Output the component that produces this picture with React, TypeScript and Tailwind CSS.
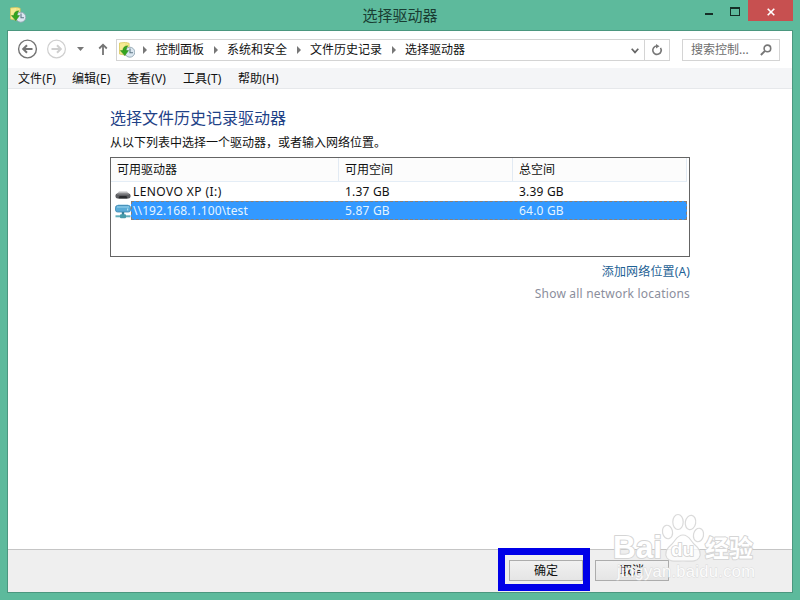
import React from 'react';

interface Drive {
  name: string;
  free: string;
  total: string;
  network?: boolean;
}

const drives: Drive[] = [
  { name: 'LENOVO XP (I:)', free: '1.37 GB', total: '3.39 GB' },
  { name: '\\\\192.168.1.100\\test', free: '5.87 GB', total: '64.0 GB', network: true },
];

const crumbs = ['控制面板', '系统和安全', '文件历史记录', '选择驱动器'];

const menus = [
  { label: '文件(F)', width: 'w-[54px]' },
  { label: '编辑(E)', width: 'w-[55px]' },
  { label: '查看(V)', width: 'w-[56px]' },
  { label: '工具(T)', width: 'w-[55px]' },
  { label: '帮助(H)', width: 'w-[55px]' },
];

const HistoryIcon: React.FC = () => (
  <svg width="16" height="16" viewBox="0 0 16 16" className="block shrink-0">
    <path d="M.5 1 6.5.4l3.6.9v10.9l-3.4 1L.5 12z" fill="#f6eb93" stroke="#d9c75c" strokeWidth=".8" />
    <path d="M7 .8v12" stroke="#e8d970" strokeWidth=".8" />
    <circle cx="10.8" cy="10.2" r="5" fill="#dbe7f0" stroke="#91a5b1" strokeWidth=".9" />
    <path d="M11 6.6v4.2h3" fill="none" stroke="#607887" strokeWidth="1.1" />
    <path d="M8.8 3.8C5.2 4 3.9 6 3.9 8.6H1.4l4.4 5 3.7-5H7.2c0-2 .3-3.2 1.6-4.8z" fill="#35a51f" stroke="#23851a" strokeWidth=".5" />
  </svg>
);

const CrumbArrow: React.FC = () => (
  <svg width="4" height="8" viewBox="0 0 4 8" className="block shrink-0">
    <path d="M0 0v8l4-4z" fill="#777" />
  </svg>
);

const LocalDriveIcon: React.FC = () => (
  <svg width="16" height="16" viewBox="0 0 16 16" className="block">
    <path d="M4 7.5h8l3.2 3.5H.8z" fill="#b9b9bb" />
    <rect x=".5" y="9.5" width="15" height="5" rx="2" fill="#5c5d61" />
    <path d="M2 10h12" stroke="#8e8e90" />
    <path d="M3.5 14.5c.3-2 1-2.4 2-2.4h5c1 0 1.7.4 2 2.4z" fill="#292a2d" />
  </svg>
);

const NetworkDriveIcon: React.FC = () => (
  <svg width="16" height="16" viewBox="0 0 16 16" className="block">
    <path d="M3 1.5h10l2.5 3H.5z" fill="#9ccfe8" />
    <rect x=".5" y="2.5" width="15" height="6.5" rx="2" fill="#5aabd6" stroke="#3c86b0" strokeWidth=".8" />
    <path d="M2 4h12" stroke="#9dd5ee" />
    <path d="M12.7 5.5v2" stroke="#c7eefa" />
    <path d="M6.8 9h2.4v3H6.8z" fill="#377f99" />
    <path d="M.5 12.3h15v2H.5z" fill="#62aebb" />
    <rect x="5" y="11.2" width="6" height="4" rx="1" fill="#479ba9" />
  </svg>
);

const TitleBar: React.FC = () => (
  <div className="relative flex h-[30px] items-start justify-between pl-[10px] pr-[7px]">
    <div className="pt-[7px]">
      <HistoryIcon />
    </div>
    <div className="absolute inset-x-0 top-[5px] text-center text-[15px] leading-5 text-[#193d32]">选择驱动器</div>
    <div className="flex h-[21px]">
      <div className="flex w-[27px] justify-center pt-[13px]">
        <div className="h-[2px] w-2 bg-[#152e26]" />
      </div>
      <div className="flex w-[26px] justify-center pt-[7px]">
        <div className="h-[9px] w-[10px] border border-t-2 border-[#152e26]" />
      </div>
      <div className="flex w-[45px] items-center justify-center bg-[#c75050]">
        <svg width="8" height="8" viewBox="0 0 8 8" className="mt-[2px]">
          <path d="m.7.7 6.6 6.6M7.3.7.7 7.3" stroke="#fff" strokeWidth="1.6" />
        </svg>
      </div>
    </div>
  </div>
);

const NavBar: React.FC = () => (
  <div className="flex h-[37px] items-center pl-[9px] pr-3">
    <svg width="99" height="22" viewBox="0 0 99 22" className="block shrink-0">
      <g fill="none" stroke="#747474" strokeWidth="1.4">
        <circle cx="10.5" cy="10" r="8.9" />
        <path d="M15.5 10H6.5M10 6.2 6.2 10l3.8 3.8" strokeWidth="2" />
      </g>
      <g fill="none" stroke="#cfcfcf" strokeWidth="1.2">
        <circle cx="39.5" cy="10" r="8.9" />
        <path d="M34.5 10h9M40 6.2l3.8 3.8-3.8 3.8" strokeWidth="2" />
      </g>
      <path d="M60 8h7l-3.5 4z" fill="#777" />
      <path d="M86 16V5.5M82.2 9.5 86 5.7l3.8 3.8" fill="none" stroke="#747474" strokeWidth="1.8" />
    </svg>
    <div className="flex h-[22px] w-[554px] shrink-0 border border-[#d4d4d4]">
      <div className="flex flex-1 items-center pl-[2px]">
        <HistoryIcon />
        {crumbs.map((crumb) => (
          <div key={crumb} className="flex items-center pl-2">
            <CrumbArrow />
            <span className="mr-[2px] pl-[9px] text-[12px] leading-5 text-[#111]">{crumb}</span>
          </div>
        ))}
      </div>
      <svg width="8" height="6" viewBox="0 0 8 6" className="mr-[5px] mt-[8px]">
        <path d="m.7.8 3.3 3.6L7.3.8" fill="none" stroke="#666" strokeWidth="1.7" />
      </svg>
      <div className="flex w-[25px] items-center justify-center border-l border-[#d4d4d4]">
        <svg width="12" height="12" viewBox="0 0 12 12">
          <path d="M9.5 3.9A4.2 4.2 0 1 1 5.8 2" fill="none" stroke="#777" strokeWidth="1.6" />
          <path d="M5 0v4.6L8.5 2.3z" fill="#777" />
        </svg>
      </div>
    </div>
    <div className="ml-3 flex h-[22px] w-[98px] shrink-0 items-center justify-between border border-[#d4d4d4] pl-[8px] pr-[7px] text-[12px] text-[#6d6d6d]">
      <span>搜索控制...</span>
      <svg width="12" height="12" viewBox="0 0 12 12">
        <circle cx="7.4" cy="4.4" r="3.3" fill="none" stroke="#777" strokeWidth="1.6" />
        <path d="M5 6.9.9 11" stroke="#777" strokeWidth="2" />
      </svg>
    </div>
  </div>
);

const DriveList: React.FC = () => (
  <div className="mt-[5px] h-[100px] w-[580px] border border-[#646464] pr-[2px] text-[12px]">
    <div className="flex h-6 border-b border-[#e4edf6] bg-[#fcfcfc] leading-[23px]">
      <div className="w-[228px] border-r border-[#e2eaf3] pl-[6px]">可用驱动器</div>
      <div className="w-[174px] border-r border-[#e2eaf3] pl-[6px]">可用空间</div>
      <div className="flex-1 border-r border-[#e2eaf3] pl-[6px]">总空间</div>
    </div>
    {drives.map((drive) => (
      <div key={drive.name} className="flex h-[19px] pl-1 leading-[19px]">
        <div className="w-4 shrink-0 pt-[2px]">{drive.network ? <NetworkDriveIcon /> : <LocalDriveIcon />}</div>
        <div
          className={
            drive.network
              ? 'flex flex-1 border border-dashed border-[#8a8078] bg-[#3399ff] leading-[17px] text-[#e5f5ff]'
              : 'flex flex-1 border border-transparent leading-[17px]'
          }
        >
          <div className={drive.network ? 'w-[213px] pl-[1px] tracking-[0.1px]' : 'w-[213px] pl-[1px] tracking-[0.42px]'}>
            {drive.name}
          </div>
          <div className="w-[174px] tracking-[0.2px]">{drive.free}</div>
          <div className="tracking-[0.2px]">{drive.total}</div>
        </div>
      </div>
    ))}
  </div>
);

const Watermark: React.FC = () => (
  <svg
    width="150"
    height="74"
    viewBox="0 0 150 74"
    className="pointer-events-none absolute left-[610px] top-[510px] font-['Liberation_Sans','Noto_Sans_CJK_SC',sans-serif]"
  >
    <g fill="#fff" fillOpacity=".75" stroke="#dadada" strokeWidth="1.2">
      <ellipse cx="57.5" cy="22" rx="5" ry="6.8" transform="rotate(-12 57.5 22)" />
      <ellipse cx="68" cy="12" rx="5.2" ry="7.5" />
      <ellipse cx="80.5" cy="12.5" rx="5.2" ry="7.2" transform="rotate(10 80.5 12.5)" />
      <ellipse cx="88.5" cy="25" rx="5" ry="6.8" transform="rotate(12 88.5 25)" />
      <path d="M73 25c-6 0-7 5-11 9-5 4-8 9-5 14 3 4 8 3 16 3s13 1 16-3c3-5 0-10-5-14-4-4-5-9-11-9z" />
    </g>
    <g fill="#fff" stroke="#d5d5d5" strokeWidth="2" strokeLinejoin="round" paintOrder="stroke" fontWeight="700">
      <text x="3" y="48" fontSize="31.5">
        Bai
      </text>
      <text x="95" y="47" fontSize="24">
        经验
      </text>
    </g>
    <text x="61" y="45.5" fontSize="19" fontWeight="700" fill="#fff" stroke="#cfcfcf" strokeWidth="1.6" paintOrder="stroke">
      du
    </text>
    <text x="7" y="67" fontSize="16.5" fill="#fff" fillOpacity=".9" stroke="#dadada" strokeWidth=".8" paintOrder="stroke" textLength="138">
      jingyan.baidu.com
    </text>
  </svg>
);

const App: React.FC = () => {
  return (
    <div className="relative h-[600px] w-[800px] overflow-hidden bg-[#5dba9c] font-['Noto_Sans','Noto_Sans_CJK_SC',sans-serif] text-[#111]">
      <TitleBar />
      <div className="mx-[7px] flex h-[563px] flex-col border border-[#4b977f] bg-white">
        <NavBar />
        <div className="flex h-[21px] shrink-0 border-b border-[#e6e8eb] bg-[#f4f5f7] pl-[10px] text-[12px] leading-[22px] tracking-[0.1px]">
          {menus.map((menu) => (
            <div key={menu.label} className={menu.width}>
              {menu.label}
            </div>
          ))}
        </div>

        <div className="flex-1 pl-[102px] pt-[19px]">
          <h1 className="text-[16px] leading-5 text-[#1f4287]">选择文件历史记录驱动器</h1>
          <p className="mt-[5px] text-[12px] leading-[19px]">从以下列表中选择一个驱动器，或者输入网络位置。</p>
          <DriveList />
          <div className="mt-[5px] w-[580px] text-right text-[12px] leading-5">
            <div className="tracking-[0.15px] text-[#1e6295]">添加网络位置(A)</div>
            <div className="mt-[2px] tracking-[0.2px] text-[#8b8e9c]">Show all network locations</div>
          </div>
        </div>

        <div className="flex h-[43px] shrink-0 items-start border-t border-[#c5c5c5] bg-[#efefef] pl-[490px] text-[12px]">
          <div className="-mt-[2px] flex h-[43px] w-[92px] items-start justify-end border-[7px] border-[#0000e8] pt-[5px]">
            <div className="flex h-[21px] w-[74px] items-center justify-center border border-[#acacac] bg-linear-to-b from-[#f1f1f1] to-[#e5e5e5]">
              确定
            </div>
          </div>
          <div className="ml-[5px] mt-[10px] flex h-[21px] w-[74px] items-center justify-center border border-[#acacac] bg-linear-to-b from-[#f1f1f1] to-[#e5e5e5]">
            取消
          </div>
        </div>
      </div>
      <Watermark />
    </div>
  );
};

export default App;
